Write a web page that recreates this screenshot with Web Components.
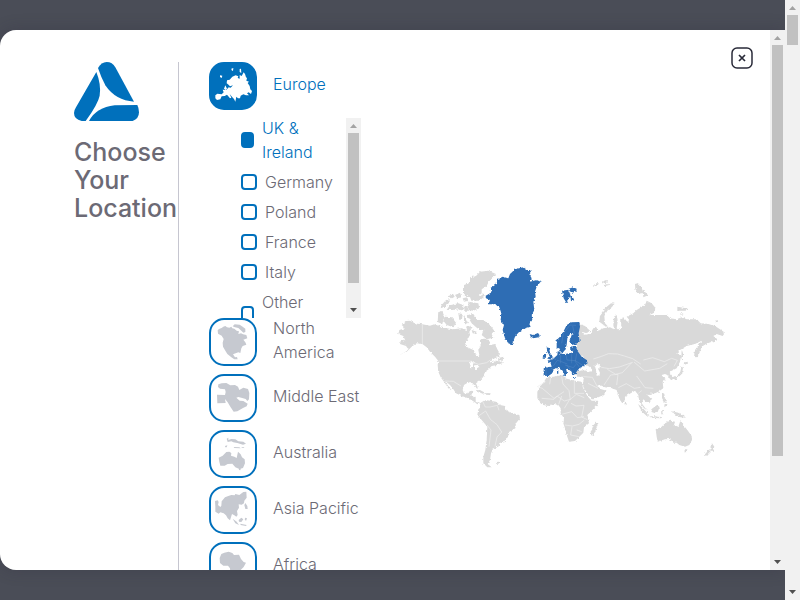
<!DOCTYPE html>
<html lang="en">
<head>
<meta charset="utf-8">
<meta name="viewport" content="width=device-width, initial-scale=1">
<title>Choose Your Location</title>
<style>
html, body { margin: 0; height: 100%; overflow: hidden; }
body { font: 300 16px/24px Inter, "Liberation Sans", sans-serif; color: #6c6a75; --blue: #0070bc; --land: #c6c9d0; }
</style>
</head>
<body>
<location-page>
  <location-dialog>
    <dialog-heading slot="heading">Choose Your Location</dialog-heading>
    <region-list slot="regions">
      <region-item icon="europe" active>Europe</region-item>
      <country-list>
        <country-option checked wrapped>UK &amp; Ireland</country-option>
        <country-option>Germany</country-option>
        <country-option>Poland</country-option>
        <country-option>France</country-option>
        <country-option>Italy</country-option>
        <country-option wrapped>Other</country-option>
      </country-list>
      <region-item icon="north">North America</region-item>
      <region-item icon="middle">Middle East</region-item>
      <region-item icon="australia">Australia</region-item>
      <region-item icon="asia">Asia Pacific</region-item>
      <region-item icon="africa">Africa</region-item>
    </region-list>
    <world-map slot="map"></world-map>
  </location-dialog>
</location-page>

<script>
const define = (name, html, setup) => customElements.define(name, class extends HTMLElement {
  connectedCallback() {
    if (this.shadowRoot) return;
    const template = document.createElement('template');
    template.innerHTML = html;
    this.attachShadow({ mode: 'open' }).append(template.content.cloneNode(true));
    if (setup) setup(this, this.shadowRoot);
  }
});

define('scroll-bar', `
<style>
:host { display: flex; flex-direction: column; flex: none; width: 15px; background: #f1f1f1; }
svg { flex: none; width: 15px; height: 15px; }
.track { flex: 1; min-height: 0; }
.thumb { height: var(--thumb, 50%); margin: 0 2px; background: #c1c1c1; }
</style>
<svg viewBox="0 0 15 15"><path d="M4 10h7L7.500 6z" fill="#a3a3a3"/></svg>
<div class="track"><div class="thumb"></div></div>
<svg viewBox="0 0 15 15"><path d="M4 5h7L7.500 9z" fill="#505050"/></svg>`);

define('location-page', `
<style>
:host { display: flex; height: 100vh; background: #4a4d57; }
main { flex: 1; min-width: 0; box-sizing: border-box; padding: 30px 0; overflow: hidden; display: flex; }
scroll-bar { --thumb: 30px; }
</style>
<main><slot></slot></main><scroll-bar></scroll-bar>`);

define('location-dialog', `
<style>
:host { display: block; flex: 1; min-width: 0; border-radius: 16px 0 0 16px; box-shadow: 0 0 16px rgba(45,42,60,.3); }
section { position: relative; display: flex; height: 100%; background: #fff; border-radius: 16px 0 0 16px; overflow: hidden; }
.body { flex: 1; min-width: 0; align-self: flex-start; display: grid; grid-template-columns: 105px 182px minmax(0, 1fr); padding: 32px 35px 0 74px; }
.heading { border-right: 1px solid #c6c6d0; }
.regions { padding-left: 30px; }
.map { display: flex; align-items: center; padding-left: 29px; }
::slotted(world-map) { flex: 1; min-width: 0; }
.close { position: absolute; top: 17px; right: 32px; width: 22px; height: 22px; padding: 0; border: 0; background: none; }
.close svg { display: block; }
scroll-bar { --thumb: 80.500%; }
</style>
<section role="dialog" aria-label="Choose Your Location">
  <div class="body">
    <div class="heading"><slot name="heading"></slot></div>
    <div class="regions"><slot name="regions"></slot></div>
    <div class="map"><slot name="map"></slot></div>
  </div>
  <button class="close" aria-label="Close"><svg width="22" height="22" viewBox="0 0 22 22" fill="none" stroke="#292a38"><rect x="1" y="1" width="20" height="20" rx="5" stroke-width="1.500"/><path d="M8 8l6 6M14 8l-6 6" stroke-width="1.700"/></svg></button>
  <scroll-bar></scroll-bar>
</section>`);

define('dialog-heading', `
<style>
:host { display: block; }
svg { display: block; width: 65px; height: 59px; }
h1 { margin: 17px 0 0; font-size: 25px; line-height: 28px; font-weight: 500; }
</style>
<svg viewBox="0 0 195 177" fill="#0070bc"><path d="M72 18Q82 0 98 0Q115 0 124 16L180 119Q125 116 94 70Q82 48 72 18Z"/><path d="M67 30Q82 67 77 101Q72 126 35 177L23 177Q0 172 0 153Q0 145 6 136Z"/><path d="M45 177Q67 136 122 130L190 129Q195 139 195 151Q195 170 176 177Z"/></svg>
<h1><slot></slot></h1>`);

/* Each outline sits in its own drawing space; box is the part of it that fills the button. */
const icons = {
  europe: { box: '48 42 132 132', path: 'M61 136L67 131 80 133 86 127 83 119 94 120 101 112 107 113 114 106 105 109 99 103 95 100 96 91 104 89 112 80 122 76 130 79 128 84 134 86 134 75 140 78 146 67 150 72 153 82 156 84 154 92 162 95 158 99 164 108 166 118 171 123 168 132 161 127 156 130 162 136 153 136 145 133 137 137 135 145 129 145 124 140 121 155 117 147 112 142 104 132 109 143 105 145 96 134 89 138 80 139 76 148 66 150 61 145ZM75 76L82 77 80 84 75 81ZM109 56L115 54 114 63 110 61ZM134 57L138 56 139 69 134 66ZM87 116L91 106 96 116 92 120Z' },
  north: { box: '48 30 132 132', path: 'M68 61L72 57 80 54 85 50 91 48 96 52 103 53 109 50 112 55 118 56 125 62 132 64 130 72 138 70 144 73 154 75 157 85 145 89 151 97 154 104 143 108 139 115 136 129 130 127 122 130 114 133 120 142 126 141 128 148 118 148 109 142 97 132 91 122 84 110 83 98 86 87 80 77 69 71ZM113 49L119 43 134 44 143 50 151 56 151 66 145 68 139 62 130 54 120 52Z' },
  middle: { box: '48 198 132 132', path: 'M66 254L90 255 92 246 90 238 75 236 69 231 70 223 80 220 94 219 106 226 120 225 129 230 133 240 145 233 159 237 163 249 162 268 157 273 152 267 139 263 130 261 124 263 134 272 145 273 158 281 155 289 144 294 127 304 116 305 106 290 98 277 90 267 92 279 67 280Z' },
  australia: { box: '48 21 132 132', path: 'M71 98L83 92 94 81 103 80 109 84 108 92 118 95 125 99 129 80 137 88 141 97 149 103 150 115 144 129 133 132 121 127 112 116 98 117 89 122 76 122 73 110ZM131 129L138 129 136 136 132 135ZM95 41L100 38 100 45 109 42 121 43 130 49 145 50 153 56 144 59 127 54 115 52 109 49 98 51ZM90 63L97 61 95 67 91 67ZM116 66L133 67 137 70 118 69ZM140 66L148 66 147 68 140 68Z' },
  asia: { box: '48 189 132 132', path: 'M60 228L68 226 71 231 69 240 76 246 79 242 80 229 90 217 100 213 109 210 119 211 121 207 133 210 145 201 154 200 155 218 148 227 147 235 140 239 131 238 132 248 126 258 128 270 124 275 118 271 111 267 105 286 98 280 93 271 86 265 76 262 71 266 61 260 61 245ZM151 234L157 243 158 252 151 252 148 240ZM113 281L125 290 132 300 121 295ZM131 285L139 278 145 283 139 291 132 290ZM136 296L155 300 153 303 137 300ZM151 278L156 280 153 288 149 283Z' },
  africa: { box: '48 357 132 132', path: 'M74 399L79 387 88 383 101 380 112 384 117 390 132 389 138 402 146 411 153 413 146 426 137 435 139 447 130 462 120 465 112 462 106 445 105 430 99 422 85 422 75 414Z' }
};

define('region-list', `
<style>:host { display: flex; flex-direction: column; padding-bottom: 74px; } ::slotted(region-item) { margin-bottom: 8px; }</style><slot></slot>`);

define('region-item', `
<style>
:host { display: block; }
button { display: flex; align-items: center; gap: 16px; width: 100%; height: 48px; padding: 0; border: 0; background: none; color: inherit; font: inherit; text-align: left; }
.icon { box-sizing: border-box; flex: none; width: 48px; height: 48px; border: 2px solid var(--blue); border-radius: 15px; fill: var(--land); background: #fff; }
span { margin-top: -4px; }
:host([active]) button { color: var(--blue); }
:host([active]) .icon { background: var(--blue); fill: #fff; }
</style>
<button type="button"><svg class="icon"><path/></svg><span><slot></slot></span></button>`,
(host, root) => {
  const icon = icons[host.getAttribute('icon')];
  root.querySelector('svg').setAttribute('viewBox', icon.box);
  root.querySelector('path').setAttribute('d', icon.path);
});

define('country-list', `
<style>
:host { display: flex; height: 200px; }
.options { flex: 1; min-width: 0; display: flex; flex-direction: column; gap: 6px; padding-left: 32px; overflow: hidden; }
scroll-bar { --thumb: 88%; }
::slotted(*) { flex: none; }
</style>
<div class="options"><slot></slot></div><scroll-bar></scroll-bar>`);

define('country-option', `
<style>
:host { display: block; }
label { display: flex; align-items: center; gap: 8px; height: 24px; }
input { appearance: none; box-sizing: border-box; flex: none; width: 16px; height: 16px; margin: 0 0 4px; border: 2px solid var(--blue); border-radius: 4px; background: #fff; }
span { margin-top: -4px; }
:host([wrapped]) label { height: 48px; }
:host([wrapped]) span { align-self: flex-start; margin-top: -2px; }
:host([wrapped]) input { width: 13px; }
:host([checked]) label { color: var(--blue); }
input:checked { background: var(--blue); }
</style>
<label><input type="checkbox"><span><slot></slot></span></label>`,
(host, root) => { root.querySelector('input').checked = host.hasAttribute('checked'); });

define('world-map', `
<style>:host { display: block; } svg { display: block; width: 100%; height: auto; }</style>
<svg viewBox="0 0 1035 645" role="img" aria-label="World map with Europe highlighted">
<filter id="coast" x="-2%" y="-2%" width="104%" height="104%"><feTurbulence type="fractalNoise" baseFrequency=".16" numOctaves="2" seed="4"/><feDisplacementMap in="SourceGraphic" scale="9" xChannelSelector="R" yChannelSelector="G"/></filter>
<g filter="url(#coast)" fill="#d9d9d9">
<path d="M22 288L45 277 55 268 48 258 30 252 32 243 45 240 40 228 25 222 28 210 45 205 35 195 50 183 60 182 75 190 97 193 120 197 135 192 150 198 170 205 190 208 215 205 232 210 228 200 240 196 245 205 238 215 240 225 232 240 225 250 232 262 250 270 258 282 263 292 268 285 265 270 272 258 270 240 280 236 298 240 300 255 315 252 322 268 330 282 325 290 308 298 300 308 320 302 340 308 322 315 305 318 296 328 285 335 280 350 272 360 258 370 263 382 262 388 255 378 245 367 235 367 222 375 218 390 222 400 235 400 240 392 250 393 244 405 248 412 257 410 257 425 270 430 262 433 250 424 235 415 215 408 198 400 190 388 180 375 165 362 172 374 186 392 175 385 162 365 152 352 145 335 143 315 145 303 135 290 120 275 110 262 97 252 80 250 65 260 50 275Z"/>
<path d="M230 165L250 162 262 180 280 180 300 195 315 215 305 222 310 233 290 238 275 225 280 212 262 205 245 190ZM222 105L222 75 240 68 240 52 258 48 270 35 295 32 318 42 310 52 296 65 290 78 275 88 275 100 260 112 248 108 240 112ZM165 170L185 172 198 188 190 202 170 195 160 182ZM145 155L158 153 162 172 157 192 143 186ZM205 160L218 162 216 178 208 180ZM222 165L230 180 235 192 222 188ZM155 135L168 120 180 118 176 130 165 140 152 145ZM180 135L205 130 220 135 220 152 205 148 190 150 170 150ZM195 105L210 98 215 112 202 115ZM218 115L232 112 235 122 222 125ZM235 125L265 130 268 145 250 152 235 150ZM236 100L272 108 285 98 283 110 268 122 244 122ZM245 210L260 215 260 222 248 220ZM175 108L190 103 194 110 184 116ZM222 140l12 2 0 10-10 0ZM325 294L340 290 338 303 324 304ZM255 391L270 390 285 398 278 401 265 395ZM285 399L302 400 300 405 287 404Z"/>
<path d="M270 430L285 420 300 422 318 425 330 435 345 438 350 452 365 458 388 465 390 475 378 490 376 505 358 515 352 530 340 548 330 548 325 560 310 565 303 580 300 600 293 612 305 622 292 622 280 610 280 590 286 570 290 540 292 500 275 480 262 465 265 448 272 442ZM318 606l10-1-2 6-8 0z"/>
<path d="M568 192L585 198 600 212 590 220 575 215 582 224 600 222 610 205 618 200 625 212 640 205 660 202 672 208 670 195 672 170 680 165 683 185 680 205 688 212 695 200 690 178 700 172 712 185 718 180 710 170 730 160 740 150 765 135 770 122 785 130 797 145 790 160 778 165 810 165 830 165 840 175 860 178 875 172 890 178 920 178 932 190 955 192 975 198 990 208 1005 218 998 228 980 222 970 228 985 240 965 245 948 252 935 260 930 275 922 292 912 290 915 270 930 250 935 242 915 252 890 258 870 270 862 280 873 288 870 305 860 325 845 332 838 340 850 355 842 360 832 345 825 342 815 345 820 352 828 358 818 365 820 385 805 395 795 400 775 402 772 405 785 418 778 430 768 425 760 418 755 430 770 450 762 445 748 425 745 405 735 392 722 400 705 410 703 425 697 430 690 420 683 402 680 390 665 385 645 382 628 374 622 378 634 388 650 392 640 405 612 418 605 418 595 405 582 385 578 375 582 350 560 350 555 342 558 335 580 330 600 335 608 330 598 320 585 312 580 290 560 280 560 250 565 220Z"/>
<path d="M442 395L450 380 462 365 470 352 490 350 518 345 525 355 555 362 575 365 580 385 592 408 605 422 625 422 622 435 605 452 592 465 595 480 597 490 582 502 580 518 568 530 555 543 537 545 530 525 525 505 520 490 522 475 512 460 512 445 505 435 490 432 475 438 460 435 450 425 442 415ZM620 485l3 10-12 30-6 2-3-9 8-22z"/>
<path d="M797 508L815 500 825 490 840 482 855 485 852 495 865 500 872 480 880 495 892 510 905 528 906 540 898 555 885 560 868 555 860 548 850 548 840 537 825 538 803 545 800 530ZM883 568l9 0-1 8-6 1zM965 548l8 12-4 12-8 0 1-12zM958 568l5 4-14 15-8 0zM846 453l12 4 12 2 18 14-20-2-14-8zM785 447l16-12 8 6-6 15-14 2-7-6zM744 432l12 10 22 24-5 4-17-15zM775 468l20 1 22 3-2 3-24-1zM813 451l7-1-3 7 3 8-6-2zM816 400l7 1 2 17 6 10-7 0-8-14zM824 432l8 0-2 8-7-2zM845 352l18-5 8-12 4-17 4 6-3 17-16 15-12 3zM878 310l12-5 6 4-15 7zM875 268l4 12 0 20-5-5zM628 185L630 165 645 145 663 130 674 131 665 142 652 152 643 168 645 190 656 202 645 198ZM735 72l10-3 10 16 5 14-14 3-10-14zM758 88l16 18-14 6zM610 75l16-7-2 8-14 5zM635 65l14-5 5 6-15 5zM640 76l15-5 2 4-14 4zM862 140l22 4 14 4-12 4-24 0zM873 158l8 4-6 3zM975 182l9-1 0 4-8 2zM706 425l5 8-4 3-4-4z"/>
</g>
<path filter="url(#coast)" fill="#fff" d="M614 315L628 312 632 320 624 326 630 338 628 348 620 345 618 330ZM235 308l13-6 8 7-10 2 0 14-6-1 2-14-8 0zM252 316l10-1 6 5-12 8z"/>
<path fill="none" stroke="#f0f0f0" stroke-width="2" d="M97 193V252M145 303H240L265 313 290 308 302 299M165 363L190 364 213 378M278 424l8 17 14 0 22-5 5 15M267 467l20-14 14 25 20 16 14 22-14 15-6 28M291 495l12 15-6 50M467 365l-25 15 15 5 35 30 30-20M482 353l-3 20M515 350l4 22 18 20 4 28M553 363V400H582M455 415l37 3 9-10 22 15 18-5 18-15 24 10M506 433l9-25M538 420l-15 25M543 430l15 8 24-2M582 436l-7 35 17 8M515 463l30-8 17 18 20-3M525 495l22 3 20-5 16-13M546 500l-4 25 25 5M560 510l15 5M582 350l25 2 15 28M594 370l30 15M610 297l25-8 20-8 28 1 20 6 25 8 24 16M760 300l28-7 35 12 22-10 17 6-10 18M732 306l32 27 45-8 23-14M620 310l14 12 24 4 30-5 40-14M652 328l25 15 20-5 28-30M642 375l20-30 22-2-4 32M685 383l24-12 24 14 18-3M745 400l10-8M740 348l25 35 25 2"/>
<g filter="url(#coast)" fill="#2e6db4">
<path d="M286 108L305 97 300 85 320 72 322 58 338 50 355 55 360 42 375 28 400 22 412 30 425 30 418 42 425 55 420 65 440 60 452 65 440 80 435 95 437 110 430 125 433 150 425 165 427 180 418 192 422 200 400 207 385 218 375 230 366 254 355 250 345 235 338 210 342 195 332 180 334 160 328 142 315 133 295 133 300 120 288 115Z"/>
<path d="M419 222L429 225 444 219 449 226 445 232 431 235 422 230ZM516 92L530 90 538 96 542 108 535 117 530 130 521 115ZM536 86L550 82 560 86 559 94 548 98 539 94ZM541 107L548 110 553 121 543 124Z"/>
<path d="M500 265L500 240 510 230 520 215 530 195 545 187 568 186 570 200 566 220 569 245 558 252 545 255 538 245 545 225 552 222 540 222 532 235 530 255 525 270 515 282 508 265ZM540 262L552 258 560 262 562 272 575 290 590 300 593 310 578 320 568 325 560 335 555 342 548 348 545 335 535 328 528 325 531 338 525 347 518 332 508 322 500 325 490 328 487 340 475 348 461 347 461 325 475 322 485 320 482 310 472 303 488 298 502 285 503 274 511 275 512 282 525 282 545 278 550 271 541 270ZM470 262L480 265 478 275 488 290 486 298 472 297 478 286 472 275ZM460 282L469 282 467 293 458 293ZM501 332l4-1 0 10-4 0zM519 344l9 0-2 5-6-2zM549 351l8 0 0 3-8 0z"/>
</g>
<path fill="none" stroke="#6696ca" d="M515 250l5-30 20-25 18 1M548 198l5 22M490 318l12-17 10 3 20 8M512 285v25M528 285l3 15 25 2 22 14M545 280v30M560 280l-4 25 12 16M468 325v22M482 324l8 5M525 315l25 8 8-10M498 300l-9-8M531 316l14 18"/>
</svg>`);
</script>
</body>
</html>
